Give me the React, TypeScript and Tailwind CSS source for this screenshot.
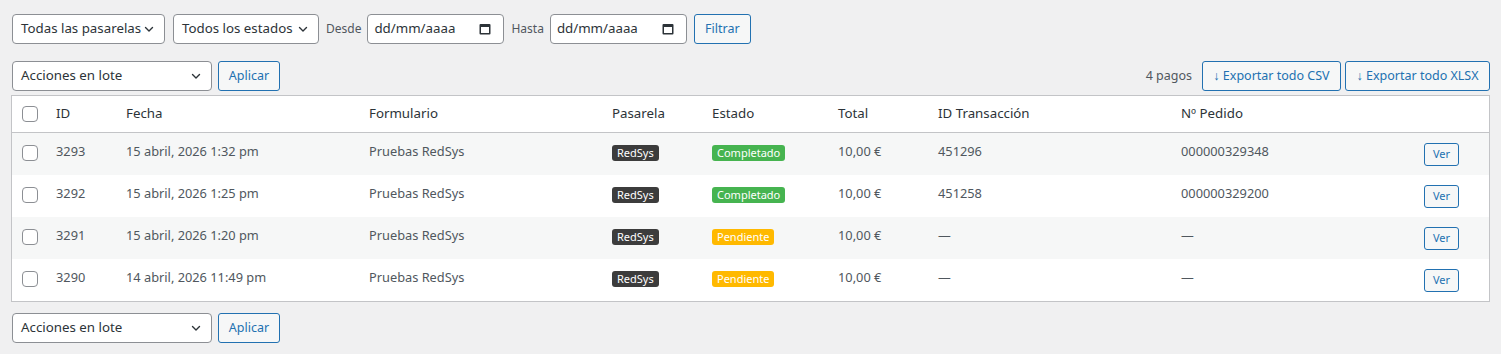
import React from "react";

const font = "font-['Noto_Sans','Open_Sans',sans-serif]";

function Chevron() {
  return (
    <svg width="12" height="12" viewBox="0 0 12 12" className="shrink-0">
      <path d="M2.5 4.5 L6 8 L9.5 4.5" fill="none" stroke="#2c3338" strokeWidth="1.4" strokeLinecap="round" strokeLinejoin="round" />
    </svg>
  );
}

function Select({ label, w }: { label: string; w: string }) {
  return (
    <div className={`${w} h-[30px] flex items-center justify-between pl-[8px] pr-[9px] bg-white border border-[#8c8f94] rounded-[4px] text-[13.3px] text-[#2c3338] whitespace-nowrap`}>
      <span>{label}</span>
      <Chevron />
    </div>
  );
}

function CalendarIcon() {
  return (
    <svg width="12" height="12" viewBox="0 0 12 12" className="shrink-0">
      <rect x="0.5" y="1" width="11" height="10.5" rx="1" fill="#2c3338" />
      <rect x="2" y="4" width="8" height="6" fill="white" />
    </svg>
  );
}

function DateInput() {
  return (
    <div className="w-[137px] h-[30px] flex items-center justify-between pl-[6px] pr-[12px] bg-white border border-[#8c8f94] rounded-[4px] text-[13.3px] text-[#2c3338] whitespace-nowrap">
      <span>dd/mm/aaaa</span>
      <CalendarIcon />
    </div>
  );
}

function Button({ children, w }: { children: React.ReactNode; w?: string }) {
  return (
    <div className={`${w ?? ""} h-[30px] flex items-center justify-center px-[6px] bg-[#f6f7f7] border border-[#2271b1] rounded-[3px] text-[12.5px] text-[#2271b1] whitespace-nowrap`}>
      {children}
    </div>
  );
}

function Checkbox() {
  return <div className="w-[16px] h-[16px] bg-white border border-[#8c8f94] rounded-[4px]" />;
}

type Row = {
  id: string;
  fecha: string;
  estado: "Completado" | "Pendiente";
  trans: string;
  pedido: string;
};

const rows: Row[] = [
  { id: "3293", fecha: "15 abril, 2026 1:32 pm", estado: "Completado", trans: "451296", pedido: "000000329348" },
  { id: "3292", fecha: "15 abril, 2026 1:25 pm", estado: "Completado", trans: "451258", pedido: "000000329200" },
  { id: "3291", fecha: "15 abril, 2026 1:20 pm", estado: "Pendiente", trans: "—", pedido: "—" },
  { id: "3290", fecha: "14 abril, 2026 11:49 pm", estado: "Pendiente", trans: "—", pedido: "—" },
];

const cols = "grid grid-cols-[34px_70px_243px_243px_100px_126px_100px_243px_243px_1fr]";

export default function App() {
  return (
    <div className={`${font} w-[1501px] h-[354px] bg-[#f0f0f1] pl-[12px] pr-[11px] pt-[14px] text-[#2c3338]`}>
      {/* Filters */}
      <div className="flex items-center h-[30px]">
        <Select label="Todas las pasarelas" w="w-[153px]" />
        <div className="w-[8px]" />
        <Select label="Todos los estados" w="w-[146px]" />
        <span className="ml-[7px] mr-[6px] text-[12px] text-[#50575e]">Desde</span>
        <DateInput />
        <span className="ml-[7px] mr-[6px] text-[12px] text-[#50575e]">Hasta</span>
        <DateInput />
        <div className="w-[7px]" />
        <Button w="w-[57px]">Filtrar</Button>
      </div>

      {/* Top actions */}
      <div className="flex items-center justify-between mt-[17px] h-[30px]">
        <div className="flex items-center gap-[6px]">
          <Select label="Acciones en lote" w="w-[200px]" />
          <Button w="w-[62px]">Aplicar</Button>
        </div>
        <div className="flex items-center">
          <span className="text-[12.5px] text-[#50575e] mr-[10px]">4 pagos</span>
          <Button w="w-[139px]">↓ Exportar todo CSV</Button>
          <div className="w-[4px]" />
          <Button w="w-[145px]">↓ Exportar todo XLSX</Button>
        </div>
      </div>

      {/* Table */}
      <div className="mt-[4px] -ml-[1px] bg-white border border-[#c3c4c7]">
        <div className={`${cols} border-b border-[#c3c4c7] h-[37px] items-center text-[13.3px] text-[#2c3338] whitespace-nowrap`}>
          <div className="pl-[10px] flex items-center"><Checkbox /></div>
          <div className="pl-[10px]">ID</div>
          <div className="pl-[10px]">Fecha</div>
          <div className="pl-[10px]">Formulario</div>
          <div className="pl-[10px]">Pasarela</div>
          <div className="pl-[10px]">Estado</div>
          <div className="pl-[10px]">Total</div>
          <div className="pl-[10px]">ID Transacción</div>
          <div className="pl-[10px]">Nº Pedido</div>
          <div />
        </div>
        {rows.map((r, i) => (
          <div key={r.id} className={`${cols} h-[42px] text-[12.8px] text-[#50575e] whitespace-nowrap ${i % 2 === 0 ? "bg-[#f6f7f7]" : "bg-white"}`}>
            <div className="pl-[10px] pt-[12px]"><Checkbox /></div>
            <div className="pl-[10px] pt-[8px] leading-[20px]">{r.id}</div>
            <div className="pl-[10px] pt-[8px] leading-[20px]">{r.fecha}</div>
            <div className="pl-[10px] pt-[8px] leading-[20px]">Pruebas RedSys</div>
            <div className="pl-[10px] pt-[10px]">
              <span className="inline-flex items-center h-[16px] px-[5px] rounded-[3px] bg-[#3c3c3c] text-white text-[11px]">RedSys</span>
            </div>
            <div className="pl-[10px] pt-[10px]">
              <span className={`inline-flex items-center h-[16px] px-[5px] rounded-[3px] text-white text-[11px] ${r.estado === "Completado" ? "bg-[#46b450]" : "bg-[#ffb900]"}`}>{r.estado}</span>
            </div>
            <div className="pl-[10px] pt-[8px] leading-[20px]">10,00 €</div>
            <div className="pl-[10px] pt-[8px] leading-[20px]">{r.trans}</div>
            <div className="pl-[10px] pt-[8px] leading-[20px]">{r.pedido}</div>
            <div className="pl-[10px] pt-[10px]">
              <div className="w-[35px] h-[23px] flex items-center justify-center bg-[#f6f7f7] border border-[#2271b1] rounded-[3px] text-[11px] text-[#2271b1]">Ver</div>
            </div>
          </div>
        ))}
      </div>

      {/* Bottom actions */}
      <div className="flex items-center gap-[6px] mt-[11px] h-[30px]">
        <Select label="Acciones en lote" w="w-[200px]" />
        <Button w="w-[62px]">Aplicar</Button>
      </div>
    </div>
  );
}
